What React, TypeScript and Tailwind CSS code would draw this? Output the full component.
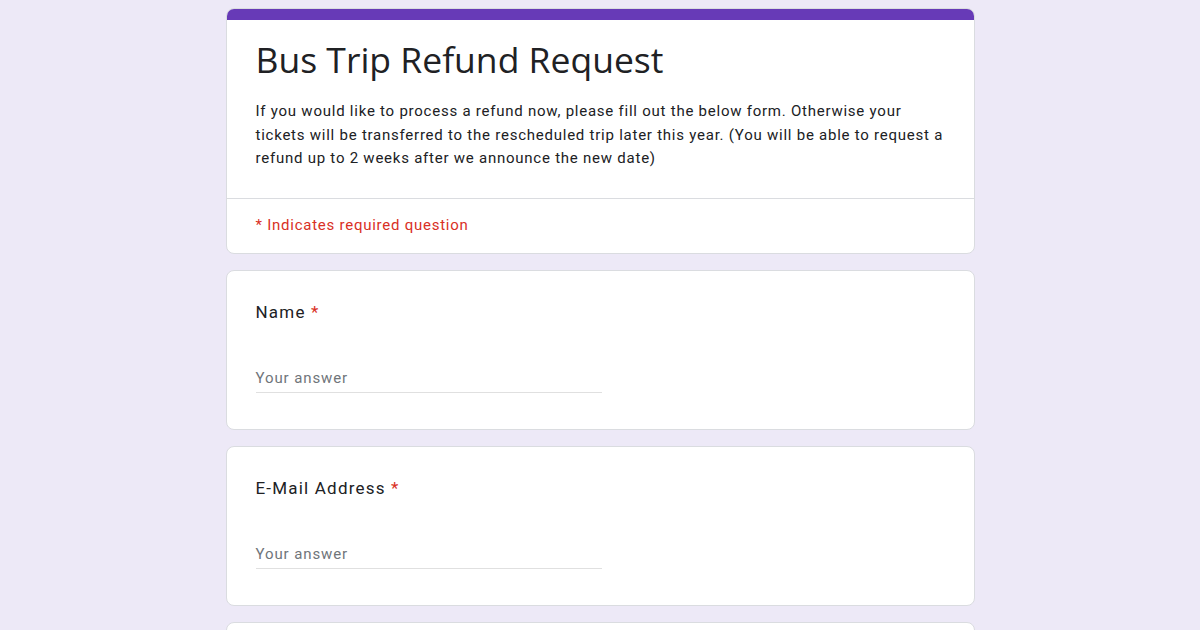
export default function App() {
  const body = { fontFamily: 'Roboto, "Liberation Sans", sans-serif' };
  return (
    <div className="min-h-[630px] w-full bg-[#ede9f7] pt-2 pb-8" style={body}>
      <div className="mx-auto flex w-[749px] flex-col gap-4">
        <div className="overflow-hidden rounded-lg border border-[#dadce0] bg-white">
          <div className="h-[11px] bg-[#673ab7]" />
          <div className="px-[29px] pt-[17px] pb-[27px]">
            <h1 className="text-[35.5px] leading-[44px] text-[#202124]" style={{ fontFamily: '"Open Sans", Roboto, sans-serif' }}>
              Bus Trip Refund Request
            </h1>
            <p className="mt-[19px] text-[15px] leading-[23.5px] tracking-[0.76px] text-[#202124]">
              If you would like to process a refund now, please fill out the below form. Otherwise your tickets will be transferred to the rescheduled trip later this year. (You will be able to request a refund up to 2 weeks after we announce the new date)
            </p>
          </div>
          <div className="border-t border-[#dadce0] px-[29px] pt-[16px] pb-[18px] text-[15px] leading-[20px] tracking-[0.75px] text-[#d93025]">
            * Indicates required question
          </div>
        </div>
        {['Name', 'E-Mail Address'].map((label) => (
          <div key={label} className="rounded-lg border border-[#dadce0] bg-white px-[29px] pt-[29px] pb-[36px]">
            <div className="text-[17px] leading-[24px] tracking-[1.2px] text-[#202124]">
              {label} <span className="text-[#d93025]">*</span>
            </div>
            <div className="mt-[44px] w-[346px] border-b border-[#e0e0e0] pb-[4px] text-[15px] leading-[20px] tracking-[0.9px] text-[#70757a]">
              Your answer
            </div>
          </div>
        ))}
        <div className="h-[160px] rounded-lg border border-[#dadce0] bg-white" />
      </div>
    </div>
  );
}
